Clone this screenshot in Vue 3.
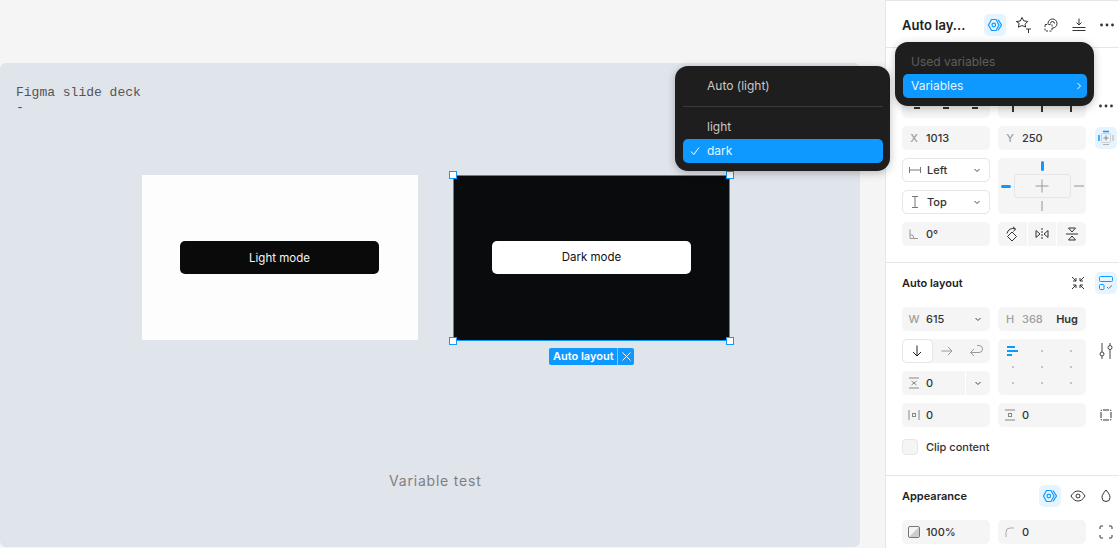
<template>
  <div class="app">
    <main class="canvas">
      <div class="slide">
        <pre class="deck-note">Figma slide deck
-</pre>
        <div class="frame frame-light">
          <div class="mode-btn btn-dark">Light mode</div>
        </div>
        <div class="frame frame-dark">
          <div class="mode-btn btn-light">Dark mode</div>
          <span class="handle tl"></span>
          <span class="handle tr"></span>
          <span class="handle bl"></span>
          <span class="handle br"></span>
        </div>
        <div class="layout-tag">
          <span class="tag-label">Auto layout</span>
          <span class="tag-close">
            <svg width="11" height="11" viewBox="0 0 11 11"><path d="M1.5 1.5l8 8M9.5 1.5l-8 8" stroke="#fff" fill="none"/></svg>
          </span>
        </div>
        <div class="slide-title">Variable test</div>
      </div>
    </main>

    <aside class="panel">
      <header class="panel-head">
        <span class="panel-title">Auto lay...</span>
        <div class="head-icons">
          <span class="icon-btn active">
            <svg width="16" height="16" viewBox="0 0 16 16" fill="none" stroke="#0d99ff" stroke-width="1.2"><path d="M1.500 8L4.500 2.500H9L12 8 9 13.500H4.500z"/><path d="M11 2.500L14.500 8 11 13.500"/><circle cx="6.800" cy="8" r="1.800"/></svg>
          </span>
          <span class="icon-btn">
            <svg width="18" height="18" viewBox="0 0 18 18" fill="none" stroke="#333"><path d="M8 1.500l1.800 3.400 4 .5-2.700 2.800.5 2.800-3.600-1.500-3.600 1.700.7-3.900L2.300 5.500l4-.5z"/><path d="M12 13h5M14.500 13v4"/></svg>
          </span>
          <span class="icon-btn">
            <svg width="16" height="16" viewBox="0 0 16 16" fill="none" stroke="#333"><circle cx="9.500" cy="6.500" r="4.500"/><path d="M7.500 6.500a2 2 0 0 1 4 0"/><rect x="2" y="7.500" width="7" height="6.500" fill="#fff" stroke-dasharray="2 1.500"/></svg>
          </span>
          <span class="icon-btn">
            <svg width="16" height="16" viewBox="0 0 16 16" fill="none" stroke="#333"><path d="M8 1.500v6.500M5.500 5.500L8 8l2.500-2.500M1.500 10.500h13M1.500 13.500h13"/></svg>
          </span>
          <span class="icon-btn">
            <svg width="16" height="16" viewBox="0 0 16 16" fill="#333"><circle cx="2.500" cy="8" r="1.400"/><circle cx="8" cy="8" r="1.400"/><circle cx="13.500" cy="8" r="1.400"/></svg>
          </span>
        </div>
      </header>

      <section class="section pos-section">
        <div class="seg">
          <span class="seg-cell" v-for="n in 3" :key="'a' + n"><i class="tick"></i></span>
        </div>
        <div class="seg">
          <span class="seg-cell" v-for="n in 3" :key="'b' + n"><i class="tick tall"></i></span>
        </div>
        <span class="icon-btn side">
          <svg width="16" height="16" viewBox="0 0 16 16" fill="#333"><circle cx="2.500" cy="8" r="1.400"/><circle cx="8" cy="8" r="1.400"/><circle cx="13.500" cy="8" r="1.400"/></svg>
        </span>

        <div class="field"><span class="lbl">X</span><span>1013</span></div>
        <div class="field"><span class="lbl">Y</span><span>250</span></div>
        <span class="icon-btn side active">
          <svg width="16" height="16" viewBox="0 0 16 16" fill="none"><path d="M5 1.500h6M1 5v6" stroke="#0d99ff" stroke-width="1.500"/><path d="M15 5v6M5 14.500h6" stroke="#b3b3b3"/><rect x="3.500" y="3.500" width="9" height="9" rx="1" stroke="#cfcfcf"/><path d="M8 5.500v5M5.500 8h5" stroke="#888"/></svg>
        </span>

        <div class="select">
          <svg width="14" height="14" viewBox="0 0 14 14" fill="none" stroke="#777"><path d="M1.500 4v6M12.500 4v6M1.500 7h11"/></svg>
          <span class="select-val">Left</span>
          <svg class="chev" width="8" height="8" viewBox="0 0 8 8" fill="none" stroke="#444"><path d="M1.500 3L4 5.500 6.500 3"/></svg>
        </div>
        <div class="constraints">
          <i class="c-top"></i>
          <div class="c-mid">
            <i class="c-left"></i>
            <div class="c-box">
              <svg width="14" height="14" viewBox="0 0 14 14" fill="none" stroke="#999"><path d="M7 0.500v13M0.500 7h13"/></svg>
            </div>
            <i class="c-right"></i>
          </div>
          <i class="c-bottom"></i>
        </div>
        <span></span>

        <div class="select">
          <svg width="14" height="14" viewBox="0 0 14 14" fill="none" stroke="#777"><path d="M4 1.500h6M4 12.500h6M7 1.500v11"/></svg>
          <span class="select-val">Top</span>
          <svg class="chev" width="8" height="8" viewBox="0 0 8 8" fill="none" stroke="#444"><path d="M1.500 3L4 5.500 6.500 3"/></svg>
        </div>
        <span></span>

        <div class="field">
          <svg class="lbl-ico" width="12" height="12" viewBox="0 0 12 12" fill="none" stroke="#999"><path d="M2 1.500v9h8M2 6.500a4 4 0 0 1 4 4"/></svg>
          <span>0°</span>
        </div>
        <div class="seg gapped">
          <span class="seg-cell">
            <svg width="16" height="16" viewBox="0 0 16 16" fill="none" stroke="#333"><path d="M8 6l4.500 4.500L8 15l-4.500-4.500z"/><path d="M3 7.500A6 6 0 0 1 11.500 3M9 .8l2.500 2.200L9.500 5.500"/></svg>
          </span>
          <span class="seg-cell">
            <svg width="14" height="14" viewBox="0 0 14 14" fill="none" stroke="#333"><path d="M7 1v12" stroke-dasharray="2 1"/><path d="M1 3.500v7L5 7zM13 3.500v7L9 7z"/></svg>
          </span>
          <span class="seg-cell">
            <svg width="14" height="14" viewBox="0 0 14 14" fill="none" stroke="#333"><path d="M1 7h12"/><path d="M3.500 1h7L7 5zM3.500 13h7L7 9z"/></svg>
          </span>
        </div>
        <span></span>
      </section>

      <section class="section layout-section">
        <div class="section-head">
          <span class="section-title">Auto layout</span>
          <div class="section-icons">
            <span class="icon-btn">
              <svg width="14" height="14" viewBox="0 0 14 14" fill="none" stroke="#333"><path d="M1 1l4 4M5 2v3H2M13 1L9 5M9 2v3h3M1 13l4-4M5 12V9H2M13 13L9 9M9 12V9h3"/></svg>
            </span>
            <span class="icon-btn active">
              <svg width="18" height="18" viewBox="0 0 18 18" fill="none" stroke="#0d99ff"><rect x="2.500" y="2.500" width="13" height="5" rx="1"/><rect x="2.500" y="10.500" width="4.500" height="5" rx="1"/><path d="M10 13l1.500 1.500L15 11.500" stroke="#777"/></svg>
            </span>
          </div>
        </div>

        <div class="field"><span class="lbl">W</span><span>615</span>
          <svg class="chev" width="8" height="8" viewBox="0 0 8 8" fill="none" stroke="#444"><path d="M1.500 3L4 5.500 6.500 3"/></svg>
        </div>
        <div class="field"><span class="lbl">H</span><span class="muted">368</span><span class="hug">Hug</span></div>
        <span></span>

        <div class="direction">
          <span class="dir-btn selected">
            <svg width="12" height="12" viewBox="0 0 12 12" fill="none" stroke="#222"><path d="M6 .5v10.500M2 7l4 4 4-4"/></svg>
          </span>
          <span class="dir-btn">
            <svg width="12" height="12" viewBox="0 0 12 12" fill="none" stroke="#999"><path d="M.5 6h10.500M7 2l4 4-4 4"/></svg>
          </span>
          <span class="dir-btn">
            <svg width="14" height="14" viewBox="0 0 14 14" fill="none" stroke="#999"><path d="M8 1.500h2a3 3 0 0 1 0 7H2M5 5L1.500 8.500 5 12"/></svg>
          </span>
        </div>
        <div class="align-grid">
          <span class="dot-cell first">
            <svg width="12" height="12" viewBox="0 0 12 12" fill="#0d99ff"><rect x="0" y="1" width="8" height="2"/><rect x="0" y="5" width="11" height="2"/><rect x="0" y="9" width="5" height="2"/></svg>
          </span>
          <span class="dot-cell" v-for="n in 8" :key="'d' + n"><i class="dot"></i></span>
        </div>
        <span class="icon-btn side">
          <svg width="16" height="20" viewBox="0 0 16 20" fill="none" stroke="#444"><path d="M4 2v9M12 9v9M4 15v3M12 2v2"/><circle cx="4" cy="13" r="2"/><circle cx="12" cy="6.500" r="2"/></svg>
        </span>

        <div class="field gap-field">
          <svg class="lbl-ico" width="12" height="12" viewBox="0 0 12 12" fill="none" stroke="#888"><path d="M1 1h10M1 11h10M3.500 4L6 6l2.500-2M3.500 8L6 6l2.500 2"/></svg>
          <span>0</span>
          <span class="gap-split">
            <svg width="8" height="8" viewBox="0 0 8 8" fill="none" stroke="#444"><path d="M1.500 3L4 5.500 6.500 3"/></svg>
          </span>
        </div>
        <span class="gap-spacer"></span>

        <div class="field">
          <svg class="lbl-ico" width="12" height="12" viewBox="0 0 12 12" fill="none" stroke="#888"><path d="M1 1v10M11 1v10"/><rect x="4.500" y="4.500" width="3" height="3"/></svg>
          <span>0</span>
        </div>
        <div class="field">
          <svg class="lbl-ico" width="12" height="12" viewBox="0 0 12 12" fill="none" stroke="#888"><path d="M1 1h10M1 11h10"/><rect x="4.500" y="4.500" width="3" height="3"/></svg>
          <span>0</span>
        </div>
        <span class="icon-btn side">
          <svg width="14" height="14" viewBox="0 0 14 14" fill="none" stroke="#333"><path d="M4 2h6M4 12h6M2 4v6M12 4v6M2 3a1 1 0 0 1 1-1M11 2a1 1 0 0 1 1 1M12 11a1 1 0 0 1-1 1M3 12a1 1 0 0 1-1-1"/></svg>
        </span>

        <label class="clip-row">
          <span class="checkbox"></span>
          <span>Clip content</span>
        </label>
      </section>

      <section class="section appearance-section">
        <div class="section-head">
          <span class="section-title">Appearance</span>
          <div class="section-icons three">
            <span class="icon-btn active">
              <svg width="16" height="16" viewBox="0 0 16 16" fill="none" stroke="#0d99ff" stroke-width="1.2"><path d="M1.500 8L4.500 2.500H9L12 8 9 13.500H4.500z"/><path d="M11 2.500L14.500 8 11 13.500"/><circle cx="6.800" cy="8" r="1.800"/></svg>
            </span>
            <span class="icon-btn">
              <svg width="16" height="16" viewBox="0 0 16 16" fill="none" stroke="#333"><path d="M1 8c2-3.500 4.300-5 7-5s5 1.500 7 5c-2 3.500-4.300 5-7 5s-5-1.500-7-5z"/><circle cx="8" cy="8" r="2"/></svg>
            </span>
            <span class="icon-btn">
              <svg width="14" height="16" viewBox="0 0 14 16" fill="none" stroke="#333"><path d="M7 2c2.500 3 4 5 4 7.500a4 4 0 0 1-8 0C3 7 4.500 5 7 2z"/></svg>
            </span>
          </div>
        </div>
        <div class="field">
          <svg class="lbl-ico" width="12" height="12" viewBox="0 0 12 12"><rect x=".5" y=".5" width="11" height="11" rx="1.500" fill="#f5f5f5" stroke="#777"/><path d="M11 1v10H1z" fill="#ccc"/></svg>
          <span>100%</span>
        </div>
        <div class="field">
          <svg class="lbl-ico" width="12" height="12" viewBox="0 0 12 12" fill="none" stroke="#aaa"><path d="M2 11V6a4 4 0 0 1 4-4h4"/></svg>
          <span>0</span>
        </div>
        <span class="icon-btn side">
          <svg width="14" height="14" viewBox="0 0 14 14" fill="none" stroke="#333"><path d="M1 4V2a1 1 0 0 1 1-1h2M10 1h2a1 1 0 0 1 1 1v2M13 10v2a1 1 0 0 1-1 1h-2M4 13H2a1 1 0 0 1-1-1v-2"/></svg>
        </span>
      </section>
    </aside>

    <div class="menu mode-menu">
      <div class="menu-row">Auto (light)</div>
      <div class="menu-sep"></div>
      <div class="menu-row">light</div>
      <div class="menu-row on">
        <svg class="check" width="10" height="10" viewBox="0 0 10 10" fill="none" stroke="#fff"><path d="M1 5.500L3.800 8.500 9 1.500"/></svg>
        dark
      </div>
    </div>

    <div class="menu var-menu">
      <div class="menu-row dim">Used variables</div>
      <div class="menu-row on">
        Variables
        <svg class="sub" width="6" height="8" viewBox="0 0 6 8" fill="none" stroke="#fff"><path d="M1.500 1L4.500 4 1.500 7"/></svg>
      </div>
    </div>
  </div>
</template>

<script setup>
</script>

<style>
html,
body {
  margin: 0;
  overflow: hidden;
}
</style>

<style scoped>
.app {
  position: relative;
  display: flex;
  width: 1119px;
  height: 548px;
  overflow: hidden;
  background: #f5f5f5;
  font-family: Inter, "Liberation Sans", sans-serif;
  font-size: 11px;
  font-weight: 500;
  color: #333;
}

.canvas {
  flex: 1;
  min-width: 0;
  padding-top: 63px;
}

.slide {
  position: relative;
  width: 860px;
  height: 484px;
  background: #e0e4eb;
  border-radius: 6px;
}

.deck-note {
  margin: 0;
  position: absolute;
  left: 16px;
  top: 22px;
  font-family: "Liberation Mono", monospace;
  font-size: 13px;
  font-weight: 400;
  line-height: 15px;
  color: #555;
}

.frame {
  position: absolute;
  top: 112px;
  box-sizing: border-box;
  display: flex;
  align-items: center;
  justify-content: center;
}

.frame-light {
  left: 142px;
  width: 276px;
  height: 165px;
  padding-right: 1px;
  background: #fdfdfd;
}

.frame-dark {
  left: 453px;
  width: 277px;
  height: 166px;
  padding-bottom: 2px;
  background: #0a0b0d;
  outline: 1px solid #0d99ff;
  outline-offset: -1px;
}

.mode-btn {
  width: 199px;
  height: 33px;
  border-radius: 5px;
  display: flex;
  align-items: center;
  justify-content: center;
  font-size: 11.500px;
  font-weight: 400;
}

.btn-dark {
  background: #0a0a0a;
  color: #f5f5f5;
}

.btn-light {
  background: #fff;
  color: #111;
}

.handle {
  position: absolute;
  width: 6px;
  height: 6px;
  background: #fff;
  border: 1px solid #0d99ff;
}

.handle.tl { left: -4px; top: -4px; }
.handle.tr { right: -4px; top: -4px; }
.handle.bl { left: -4px; bottom: -4px; }
.handle.br { right: -4px; bottom: -4px; }

.layout-tag {
  position: absolute;
  left: 549px;
  top: 285px;
  height: 17px;
  display: flex;
  background: #0d99ff;
  border-radius: 2px;
  color: #fff;
  font-size: 11px;
  font-weight: 600;
  line-height: 17px;
}

.tag-label {
  padding: 0 4px;
  width: 60px;
  white-space: nowrap;
  border-right: 1px solid #7cc6ff;
}

.tag-close {
  width: 16px;
  display: flex;
  align-items: center;
  justify-content: center;
}

.slide-title {
  position: absolute;
  left: 389px;
  top: 408px;
  font-size: 14px;
  font-weight: 400;
  letter-spacing: 0.8px;
  color: #7f7f7f;
  line-height: 20px;
}

.panel {
  width: 234px;
  flex-shrink: 0;
  box-sizing: border-box;
  height: 548px;
  background: #fff;
  border-left: 1px solid #e6e6e6;
  border-top: 1px solid #e6e6e6;
}

.panel-head {
  height: 47px;
  box-sizing: border-box;
  padding: 1px 0 0 16px;
  display: flex;
  align-items: center;
  border-bottom: 1px solid #e6e6e6;
}

.panel-title {
  width: 82px;
  font-size: 13px;
  font-weight: 600;
  color: #222;
  white-space: nowrap;
}

.head-icons {
  display: flex;
  gap: 6px;
}

.icon-btn {
  width: 22px;
  height: 22px;
  border-radius: 5px;
  display: flex;
  align-items: center;
  justify-content: center;
}

.icon-btn.active {
  background: #e5f4ff;
}

.icon-btn.side {
  justify-self: center;
  align-self: center;
}

.section {
  display: grid;
  grid-template-columns: 88px 88px 24px;
  grid-auto-rows: 24px;
  gap: 8px;
  padding: 0 0 0 16px;
  border-bottom: 1px solid #e6e6e6;
}

.pos-section {
  padding-top: 46px;
  padding-bottom: 16px;
}

.layout-section {
  grid-template-rows: 28px;
  padding-top: 8px;
  padding-bottom: 16px;
}

.appearance-section {
  grid-template-rows: 28px;
  padding-top: 8px;
  border-bottom: none;
}

.section-head {
  grid-column: 1 / -1;
  height: 24px;
  display: flex;
  align-items: center;
  justify-content: space-between;
}

.section-title {
  font-weight: 600;
  font-size: 11px;
  color: #222;
}

.section-icons {
  display: flex;
  gap: 6px;
  margin-right: 1px;
}

.field {
  display: flex;
  align-items: center;
  background: #f5f5f5;
  border-radius: 5px;
  padding-left: 6px;
  position: relative;
}

.lbl {
  width: 12px;
  margin-right: 6px;
  text-align: center;
  color: #a0a0a0;
}

.lbl-ico {
  width: 12px;
  margin-right: 6px;
  flex-shrink: 0;
}

.muted {
  color: #a0a0a0;
}

.hug {
  margin-left: auto;
  padding-right: 8px;
  font-weight: 600;
}

.chev {
  margin-left: auto;
  margin-right: 8px;
}

.gap-split {
  margin-left: auto;
  width: 24px;
  height: 24px;
  display: flex;
  align-items: center;
  justify-content: center;
  border-left: 1px solid #fff;
}

.seg {
  display: flex;
  background: #f5f5f5;
  border-radius: 5px;
  overflow: hidden;
}

.seg-cell {
  flex: 1;
  display: flex;
  align-items: center;
  justify-content: center;
}

.seg.gapped {
  gap: 1px;
  background: #fff;
}

.seg.gapped .seg-cell {
  background: #f5f5f5;
}

.tick {
  width: 6px;
  height: 2px;
  background: #333;
  margin-top: 3px;
}

.tick.tall {
  width: 2px;
  height: 8px;
  margin-top: 3px;
}

.select {
  display: flex;
  align-items: center;
  box-sizing: border-box;
  border: 1px solid #e6e6e6;
  border-radius: 5px;
  padding-left: 5px;
  background: #fff;
}

.select-val {
  margin-left: 5px;
}

.constraints {
  grid-row: span 2;
  background: #f5f5f5;
  border-radius: 5px;
  display: flex;
  flex-direction: column;
  align-items: center;
  justify-content: space-between;
  padding: 3px 0;
  box-sizing: border-box;
}

.c-top {
  width: 3px;
  height: 10px;
  border-radius: 2px;
  background: #0d99ff;
}

.c-bottom {
  width: 2px;
  height: 10px;
  background: #c4c4c4;
}

.c-mid {
  display: flex;
  align-items: center;
  gap: 3px;
}

.c-left {
  width: 10px;
  height: 3px;
  border-radius: 2px;
  background: #0d99ff;
}

.c-right {
  width: 10px;
  height: 2px;
  background: #c4c4c4;
}

.c-box {
  width: 55px;
  height: 22px;
  border: 1px solid #e6e6e6;
  border-radius: 3px;
  display: flex;
  align-items: center;
  justify-content: center;
}

.direction {
  display: flex;
  background: #f5f5f5;
  border-radius: 5px;
}

.dir-btn {
  flex: 1;
  display: flex;
  align-items: center;
  justify-content: center;
}

.dir-btn.selected {
  background: #fff;
  border: 1px solid #e6e6e6;
  border-radius: 5px;
}

.align-grid {
  grid-row: span 2;
  background: #f5f5f5;
  border-radius: 5px;
  display: grid;
  grid-template-columns: repeat(3, 1fr);
  grid-template-rows: repeat(3, 1fr);
  padding: 4px 0;
}

.dot-cell {
  display: flex;
  align-items: center;
  justify-content: center;
}

.dot {
  width: 2px;
  height: 2px;
  background: #c4c4c4;
}

.clip-row {
  grid-column: 1 / -1;
  display: flex;
  align-items: center;
  gap: 8px;
}

.checkbox {
  box-sizing: border-box;
  width: 16px;
  height: 16px;
  background: #f5f5f5;
  border: 1px solid #e6e6e6;
  border-radius: 4px;
}

.menu {
  position: absolute;
  box-sizing: border-box;
  background: #1e1e1e;
  border-radius: 13px;
  padding: 8px 7px 8px 8px;
  color: #c9c9c9;
  font-size: 12px;
  font-weight: 400;
  box-shadow: 0 2px 8px rgba(0, 0, 0, 0.25);
}

.mode-menu {
  left: 675px;
  top: 66px;
  width: 215px;
  height: 105px;
}

.var-menu {
  left: 895px;
  top: 42px;
  width: 199px;
  height: 64px;
}

.menu-row {
  position: relative;
  height: 24px;
  line-height: 24px;
  padding-left: 24px;
  border-radius: 5px;
  white-space: nowrap;
}

.menu-row.on {
  background: #0d99ff;
  color: #e6f5ff;
}

.var-menu .menu-row {
  padding-left: 8px;
}

.menu-row.dim {
  color: #5e5e5e;
}

.menu-sep {
  height: 1px;
  background: #3a3a3a;
  margin: 8px 0;
}

.check {
  position: absolute;
  left: 7px;
  top: 7px;
}

.sub {
  position: absolute;
  right: 5px;
  top: 8px;
}
</style>
